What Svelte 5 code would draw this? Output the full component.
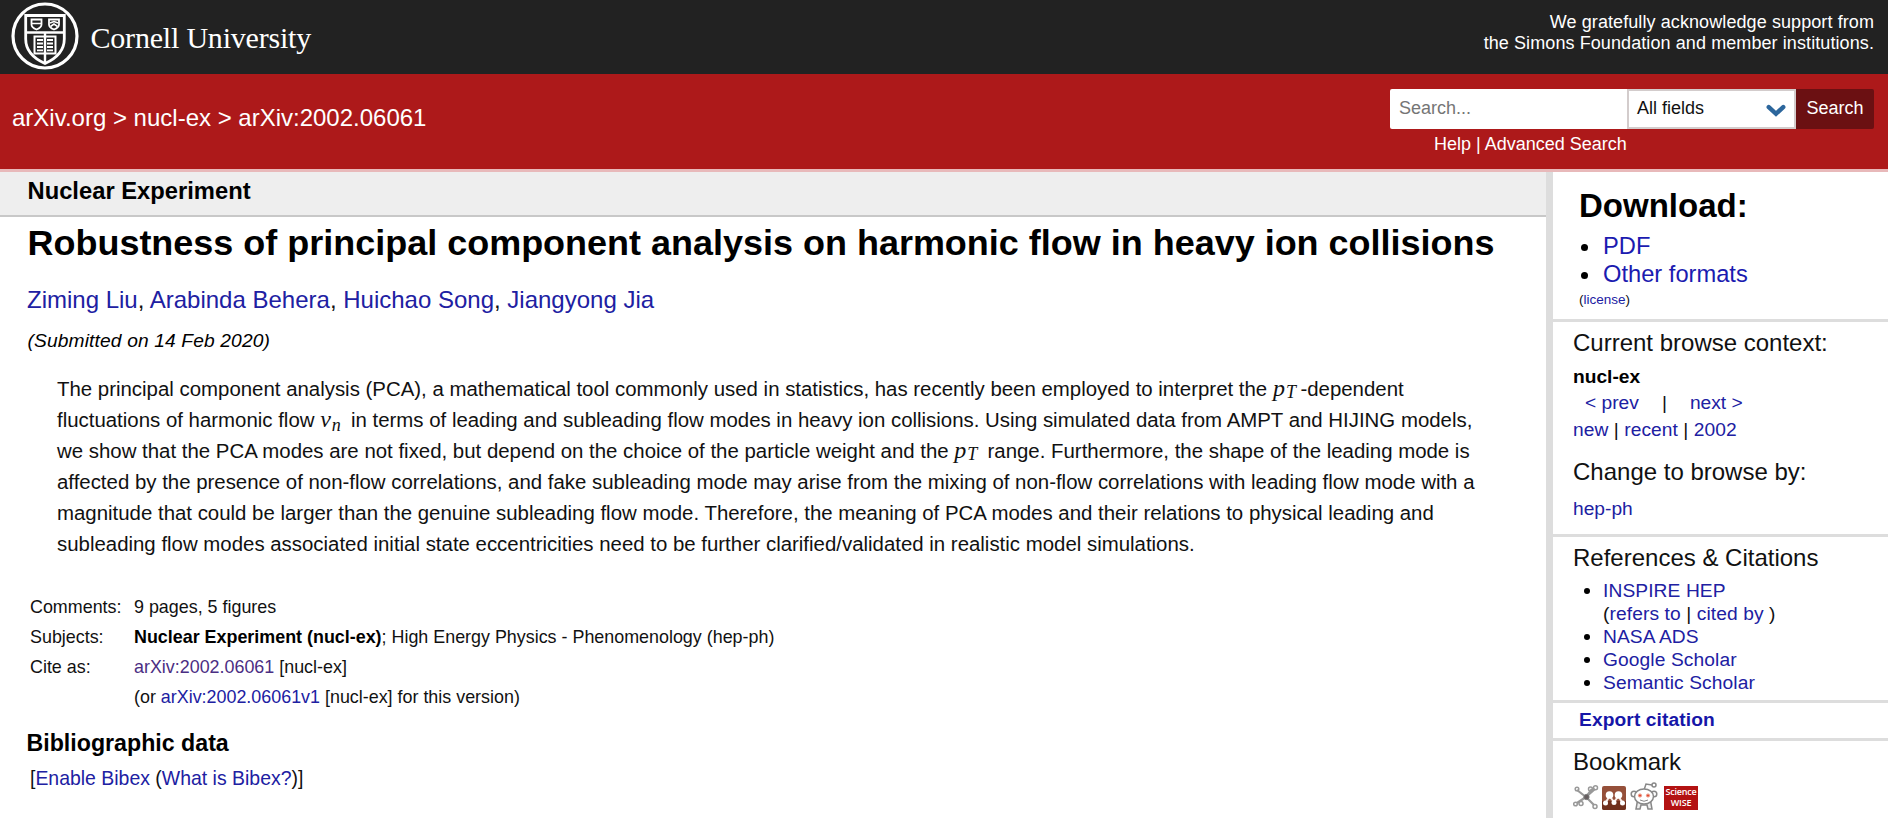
<script>
  const scholarLinks = ['NASA ADS', 'Google Scholar', 'Semantic Scholar'];
  const authors = ['Ziming Liu', 'Arabinda Behera', 'Huichao Song', 'Jiangyong Jia'];
</script>

<header class="brand">
  <a class="cornell" href="#cornell" aria-label="Cornell University">
    <svg width="68" height="68" viewBox="0 0 68 68" fill="none" stroke="#fff">
      <circle cx="34" cy="34" r="32" stroke-width="3.2" />
      <path d="M14.7 13.5H53.3V37C53.3 49 44 57 34 61.5C24 57 14.7 49 14.7 37Z" stroke-width="2.8" />
      <path d="M14.7 30.5H53.3M34 30.5V61" stroke-width="2.4" />
      <path d="M20.5 17.5H30.5V22.5C30.5 25 28 26.5 25.5 27.5C23 26.5 20.5 25 20.5 22.5ZM38 17.5H48V22.5C48 25 45.500 26.5 43 27.5C40.500 26.5 38 25 38 22.5Z" stroke-width="1.8" />
      <path d="M21 21.500H30M39 21L43 19.500L47 21M39.500 24.500L43 22L46.500 24.500" stroke-width="1.6" />
      <path d="M23.500 34.500H44.500V51.500H23.500Z" stroke-width="2" />
      <path d="M26 38H32M26 41.500H32M26 45H32M26 48.300H32M36 38H42M36 41.500H42M36 45H42M36 48.300H42" stroke-width="1.8" />
    </svg>
    <span>Cornell University</span>
  </a>
  <p class="support">We gratefully acknowledge support from<br />the Simons Foundation and member institutions.</p>
</header>

<div class="nav">
  <div class="crumbs">arXiv.org &gt; nucl-ex &gt; arXiv:2002.06061</div>
  <div class="search">
    <div class="controls">
      <div class="query">Search...</div>
      <div class="field">
        <span>All fields</span>
        <svg width="20" height="16" viewBox="0 0 18 14"><path d="M2.500 3.500L9 9.500L15.500 3.500" fill="none" stroke="#2c669c" stroke-width="4" stroke-linecap="round" /></svg>
      </div>
      <div class="go">Search</div>
    </div>
    <div class="help">Help | Advanced Search</div>
  </div>
</div>

<div class="page">
  <main>
    <div class="subject">Nuclear Experiment</div>
    <h1>Robustness of principal component analysis on harmonic flow in heavy ion collisions</h1>
    <div class="authors">{#each authors as author, i}<a href="#author">{author}</a>{i < authors.length - 1 ? ', ' : ''}{/each}</div>
    <div class="dateline">(Submitted on 14 Feb 2020)</div>
    <div class="abstract">
      <div>The principal component analysis (PCA), a mathematical tool commonly used in statistics, has recently been employed to interpret the <span class="math">p<sub>T</sub></span>-dependent</div>
      <div>fluctuations of harmonic flow <span class="math">v<sub class="low">n</sub></span> in terms of leading and subleading flow modes in heavy ion collisions. Using simulated data from AMPT and HIJING models,</div>
      <div>we show that the PCA modes are not fixed, but depend on the choice of the particle weight and the <span class="math">p<sub>T</sub></span> range. Furthermore, the shape of the leading mode is</div>
      <div>affected by the presence of non-flow correlations, and fake subleading mode may arise from the mixing of non-flow correlations with leading flow mode with a</div>
      <div>magnitude that could be larger than the genuine subleading flow mode. Therefore, the meaning of PCA modes and their relations to physical leading and</div>
      <div>subleading flow modes associated initial state eccentricities need to be further clarified/validated in realistic model simulations.</div>
    </div>
    <div class="meta">
      <span>Comments:</span><span>9 pages, 5 figures</span>
      <span>Subjects:</span><span><b>Nuclear Experiment (nucl-ex)</b>; High Energy Physics - Phenomenology (hep-ph)</span>
      <span>Cite as:</span><span><a class="visited" href="#cite">arXiv:2002.06061</a> [nucl-ex]</span>
      <span></span><span>(or <a href="#v1">arXiv:2002.06061v1</a> [nucl-ex] for this version)</span>
    </div>
    <h2>Bibliographic data</h2>
    <div class="bibex">[<a href="#bibex">Enable Bibex</a> (<a href="#what">What is Bibex?</a>)]</div>
  </main>

  <aside>
    <section class="download">
      <h2>Download:</h2>
      <ul>
        <li><a href="#pdf">PDF</a></li>
        <li><a href="#formats">Other formats</a></li>
      </ul>
      <div class="license">(<a href="#license">license</a>)</div>
    </section>
    <section class="context">
      <h3>Current browse context:</h3>
      <div class="current">nucl-ex</div>
      <div class="steps"><a href="#prev">&lt; prev</a><span>|</span><a href="#next">next &gt;</a></div>
      <div class="recent"><a href="#new">new</a> | <a href="#recent">recent</a> | <a href="#2002">2002</a></div>
      <h3 class="change">Change to browse by:</h3>
      <div class="hep"><a href="#hep">hep-ph</a></div>
    </section>
    <section class="refs">
      <h3>References &amp; Citations</h3>
      <ul>
        <li><a href="#inspire">INSPIRE HEP</a><br />(<a href="#refers">refers to</a> | <a href="#cited">cited by</a> )</li>
        {#each scholarLinks as label}
          <li><a href="#scholar">{label}</a></li>
        {/each}
      </ul>
    </section>
    <section class="export"><a href="#export">Export citation</a></section>
    <section class="bookmark">
      <h3>Bookmark</h3>
      <div class="icons">
        <svg width="26" height="26" viewBox="0 0 26 26" fill="none" stroke="#999">
          <path d="M4 6L13 13L19 5M13 13L4 19M13 13L21 21M13 13L22 5" stroke-width="2.200" />
          <circle cx="4" cy="5" r="1.800" stroke-width="1.500" /><circle cx="17.500" cy="5" r="2" stroke-width="1.500" />
          <circle cx="22.500" cy="3.800" r="2" stroke-width="1.500" /><circle cx="2.500" cy="20" r="1.800" stroke-width="1.500" />
          <circle cx="8" cy="19.500" r="2" stroke-width="1.500" /><circle cx="22" cy="22.500" r="2" stroke-width="1.500" />
          <circle cx="13.500" cy="13" r="2.600" fill="#665e60" stroke="#777" />
        </svg>
        <svg width="24" height="24" viewBox="0 0 24 24">
          <rect width="24" height="24" rx="2" fill="#95503a" /><path d="M0 15H24V22Q24 24 22 24H2Q0 24 0 22Z" fill="#70301d" />
          <path d="M3.500 17L7.500 10L12 16L16.500 10L20.500 17" fill="none" stroke="#f8ece7" stroke-width="2" />
          <g fill="#fff"><circle cx="7.500" cy="9" r="3.800" /><circle cx="16.500" cy="9" r="3.800" /><circle cx="3.500" cy="17" r="2.500" /><circle cx="12" cy="16.500" r="2.500" /><circle cx="20.500" cy="17" r="2.500" /></g>
        </svg>
        <svg width="28" height="28" viewBox="0 0 28 28" fill="#fff" stroke="#888" stroke-width="1.500">
          <path d="M14 8L16 2L22 3" fill="none" /><circle cx="24" cy="3" r="2" />
          <path d="M8 16L6 27H10L11 23H17L18 27H22L20 16Z" fill="#eee" />
          <circle cx="4" cy="12" r="2.800" /><circle cx="24" cy="12" r="2.800" />
          <ellipse cx="14" cy="14.500" rx="9.500" ry="7.500" />
          <circle cx="10" cy="13.500" r="1.600" fill="#e5482f" stroke="#eba18f" stroke-width="1" /><circle cx="18" cy="13.500" r="1.600" fill="#e5482f" stroke="#eba18f" stroke-width="1" />
          <path d="M10 18Q14 20.500 18 18" fill="none" stroke-width="1" />
        </svg>
        <span class="wise">Science<br />WISE</span>
      </div>
    </section>
  </aside>
</div>

<style>
  :global(body) { background: #fff; }
  :global(#app) { width: 1888px; height: 818px; overflow: hidden; font: 19.2px "Liberation Sans", Arial, sans-serif; color: #111; white-space: nowrap; }
  a { color: #2020a2; text-decoration: none; }
  h1, h2, h3, p, ul { margin: 0; padding: 0; }

  .brand { display: flex; justify-content: space-between; height: 74px; background: #222; color: #fff; }
  .cornell { display: flex; color: #fff; padding: 2px 0 0 11px; }
  .cornell span { margin-left: 11.500px; font: 30px/71px "Liberation Serif", serif; letter-spacing: -.2px; }
  .support { padding: 12px 14px 0 0; font-size: 18px; line-height: 21.300px; text-align: right; letter-spacing: .09px; }

  .nav { display: flex; justify-content: space-between; height: 95px; background: #ad191a; color: #fff; border-bottom: 3px solid #e8b9ba; }
  .crumbs { padding: 29px 0 0 12px; font-size: 24px; line-height: 30px; }
  .search { width: 484px; margin-right: 14px; padding-top: 15px; font-size: 18px; }
  .controls { display: flex; height: 40px; }
  .query { box-sizing: border-box; width: 237px; padding-left: 9px; background: #fff; color: #757575; line-height: 38px; border-radius: 2px 0 0 2px; }
  .field { box-sizing: border-box; display: flex; justify-content: space-between; align-items: center; width: 169px; padding: 0 8px; background: #fff; border: 2px solid #d3cccc; color: #111; line-height: 34px; }
  .field span { align-self: flex-start; }
  .field svg { margin-top: 3px; }
  .go { flex: 1; background: #6b1012; line-height: 38px; text-align: center; border-radius: 0 2px 2px 0; }
  .help { padding-left: 44px; line-height: 30px; }

  .page { display: flex; height: 646px; }
  main { width: 1546px; }
  .subject { height: 43px; padding-left: 27.500px; background: #eee; border-bottom: 2px solid #c8c8c8; font-size: 23.750px; font-weight: bold; line-height: 37.500px; color: #000; }
  h1 { margin: 4px 0 0 27.500px; font-size: 35.980px; line-height: 44px; color: #000; }
  .authors { margin: 20px 0 0 27px; font-size: 24px; line-height: 30px; }
  .dateline { margin: 13.500px 0 0 27.500px; font-style: italic; line-height: 24px; letter-spacing: .14px; color: #000; }
  .abstract { margin: 21px 0 0 57px; font-size: 20.415px; line-height: 31px; }
  .abstract div { height: 31px; }
  .math { font: italic 24px/1 "Liberation Serif", serif; padding-right: 3.500px; letter-spacing: 1px; }
  .math sub { font-size: 18px; line-height: 0; vertical-align: -2px; }
  .math .low { vertical-align: -4px; }
  .meta { display: grid; grid-template-columns: 104px auto; margin: 32.500px 0 0 30px; font-size: 17.900px; line-height: 30px; }
  .meta b { color: #000; }
  .visited { color: #4b2e83; }
  main h2 { margin: 16px 0 0 26.500px; font-size: 23.200px; line-height: 30px; color: #000; }
  .bibex { margin: 8px 0 0 30px; font-size: 19.450px; line-height: 24px; }

  aside { flex: 1; border-left: 7px solid #ddd; }
  section { box-sizing: border-box; border-bottom: 3px solid #ddd; padding-left: 20px; }
  h3 { font-size: 24px; font-weight: normal; line-height: 30px; }
  ul { list-style: none; }
  li { position: relative; }
  li::before { content: ""; position: absolute; width: 7px; height: 7px; border-radius: 50%; background: #000; }
  .download { height: 150px; padding: 14px 0 0 26px; }
  .download h2 { font-size: 33px; line-height: 40px; color: #000; }
  .download ul { padding-left: 24px; font-size: 23.700px; line-height: 28px; margin-top: 6px; }
  .download a { color: #1b1bb0; }
  .download li::before { top: 12px; left: -22px; }
  .license { margin-top: 2px; font-size: 13.500px; line-height: 20px; }
  .download .license a { color: #2020a2; }
  .context { height: 215px; padding-top: 6px; }
  .current { margin-top: 1px; font-weight: bold; line-height: 36px; color: #000; }
  .steps { display: flex; padding-left: 12px; line-height: 26px; margin-top: -5px; }
  .steps span { width: 51px; text-align: center; }
  .recent { line-height: 27px; letter-spacing: .06px; }
  .change { margin-top: 14px; }
  .hep { margin-top: 7px; line-height: 30px; }
  .refs { height: 166px; padding-top: 6px; }
  .refs ul { padding-left: 30px; margin-top: 5.500px; line-height: 23.200px; letter-spacing: .1px; }
  .refs li::before { top: 9px; left: -19px; width: 6px; height: 6px; }
  .export { height: 38px; padding-left: 26px; font-weight: bold; line-height: 34px; letter-spacing: .1px; }
  .export a { color: #1616a8; }
  .bookmark { border: 0; padding-top: 6px; }
  .icons { display: flex; align-items: flex-end; margin-top: 5px; height: 28px; }
  .icons svg:nth-child(2) { margin-left: 3px; }
  .icons svg:nth-child(3) { margin-left: 4px; }
  .wise { width: 34px; height: 24px; margin-left: 6px; background: #b31212; color: #fff; font: 600 9px/11px "Open Sans", sans-serif; text-align: center; letter-spacing: -.2px; }
</style>
